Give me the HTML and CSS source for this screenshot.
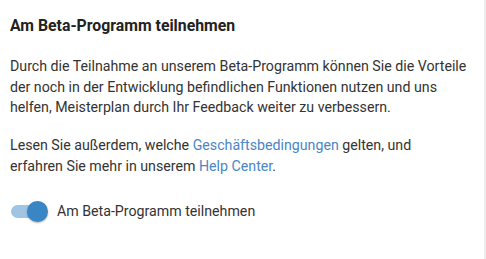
FILE: index.html
```html
<!DOCTYPE html>
<html lang="de">
<head>
<meta charset="utf-8">
<link rel="stylesheet" href="styles.css">
</head>
<body>
<div class="panel">
  <h2 class="title">Am Beta-Programm teilnehmen</h2>
  <p class="text">Durch die Teilnahme an unserem Beta-Programm können Sie die Vorteile der noch in der Entwicklung befindlichen Funktionen nutzen und uns helfen, Meisterplan durch Ihr Feedback weiter zu verbessern.</p>
  <p class="text second">Lesen Sie außerdem, welche <a class="link" href="#">Geschäftsbedingungen</a> gelten, und erfahren Sie mehr in unserem <a class="link" href="#">Help Center</a>.</p>
  <label class="toggle-row">
    <span class="switch"><span class="track"></span><span class="thumb"></span></span>
    <span class="toggle-label">Am Beta-Programm teilnehmen</span>
  </label>
</div>
</body>
</html>
```

FILE: styles.css
```css
html, body {
  margin: 0;
  padding: 0;
  background: #fff;
}
body {
  font-family: Roboto, "Liberation Sans", sans-serif;
  color: #333;
}
.panel {
  width: 486px;
  height: 259px;
  box-sizing: border-box;
  padding: 16px 0 0 10px;
  border-right: 2px solid #ececec;
}
.title {
  margin: 0;
  font-size: 15.8px;
  font-weight: 700;
  line-height: 20px;
  color: #222;
}
.text {
  margin: 20px 0 0;
  font-size: 14.2px;
  line-height: 20.7px;
  width: 462px;
}
.text.second {
  margin-top: 17px;
  width: 430px;
}
.link {
  color: #4a86c5;
  text-decoration: none;
}
.toggle-row {
  display: flex;
  align-items: center;
  gap: 9px;
  margin-top: 24px;
  height: 20px;
}
.switch {
  position: relative;
  width: 38px;
  height: 20px;
  flex: none;
}
.track {
  position: absolute;
  left: 1px;
  top: 4px;
  width: 34px;
  height: 13px;
  border-radius: 7px;
  background: #9fc4e4;
}
.thumb {
  position: absolute;
  left: 17px;
  top: 0;
  width: 21px;
  height: 21px;
  border-radius: 50%;
  background: #3a86c4;
  box-shadow: 0 1px 2px rgba(0,0,0,0.3);
}
.toggle-label {
  font-size: 14.2px;
  line-height: 20px;
}
```
